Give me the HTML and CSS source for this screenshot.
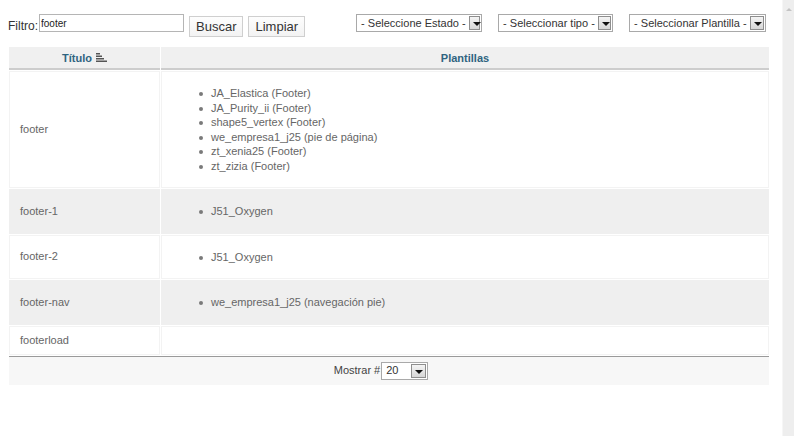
FILE: index.html
```html
<!DOCTYPE html>
<html lang="es">
<head>
    <meta charset="UTF-8">
    <title>Posiciones de módulos</title>
    <link rel="stylesheet" href="styles.css">
</head>
<body>
    <div class="page">
        <!-- Filter bar -->
        <form class="filter-bar">
            <label class="filter-label" for="filter_search">Filtro:</label>
            <input type="text" id="filter_search" class="filter-input" value="footer">
            <button type="button" class="btn">Buscar</button>
            <button type="button" class="btn">Limpiar</button>

            <div class="filters">
                <span class="fake-select sel-estado">
                    <span class="sel-text">- Seleccione Estado -</span>
                    <span class="sel-arrow"></span>
                </span>
                <span class="fake-select sel-tipo">
                    <span class="sel-text">- Seleccionar tipo -</span>
                    <span class="sel-arrow"></span>
                </span>
                <span class="fake-select sel-plantilla">
                    <span class="sel-text">- Seleccionar Plantilla -</span>
                    <span class="sel-arrow"></span>
                </span>
            </div>
        </form>

        <!-- Positions table -->
        <table class="adminlist">
            <thead>
                <tr>
                    <th class="col-title">
                        <a href="#">Título</a>
                        <svg class="sort-icon" width="11" height="10" viewBox="0 0 11 10">
                            <rect x="0" y="0" width="4" height="1.5" fill="#555"/>
                            <rect x="0" y="2.5" width="6" height="1.5" fill="#555"/>
                            <rect x="0" y="5" width="8" height="1.5" fill="#555"/>
                            <rect x="0" y="7.5" width="11" height="1.5" fill="#555"/>
                        </svg>
                    </th>
                    <th>Plantillas</th>
                </tr>
            </thead>
            <tbody>
                <tr class="row0">
                    <td>footer</td>
                    <td>
                        <ul>
                            <li>JA_Elastica (Footer)</li>
                            <li>JA_Purity_ii (Footer)</li>
                            <li>shape5_vertex (Footer)</li>
                            <li>we_empresa1_j25 (pie de página)</li>
                            <li>zt_xenia25 (Footer)</li>
                            <li>zt_zizia (Footer)</li>
                        </ul>
                    </td>
                </tr>
                <tr class="row1">
                    <td>footer-1</td>
                    <td><ul><li>J51_Oxygen</li></ul></td>
                </tr>
                <tr class="row0">
                    <td>footer-2</td>
                    <td><ul><li>J51_Oxygen</li></ul></td>
                </tr>
                <tr class="row1">
                    <td>footer-nav</td>
                    <td><ul><li>we_empresa1_j25 (navegación pie)</li></ul></td>
                </tr>
                <tr class="row0">
                    <td>footerload</td>
                    <td></td>
                </tr>
            </tbody>
            <tfoot>
                <tr>
                    <td colspan="2">
                        <div class="limit">
                            <span>Mostrar #</span>
                            <span class="fake-select sel-limit">
                                <span class="sel-text">20</span>
                                <span class="sel-arrow"></span>
                            </span>
                        </div>
                    </td>
                </tr>
            </tfoot>
        </table>
    </div>

    <!-- Frame scrollbar -->
    <div class="scrollbar">
        <span class="scroll-up"></span>
    </div>
</body>
</html>
```

FILE: styles.css
```css
/* Reset and global styling */
* {
    box-sizing: border-box;
}
html, body {
    height: 100%;
}
body {
    margin: 0;
    font-family: "Liberation Sans", Arial, sans-serif;
    font-size: 11px;
    color: #666;
    background-color: #fff;
    display: flex;
}
.page {
    flex: 1;
    padding: 14px 12px 0 8px;
}

/* Filter bar */
.filter-bar {
    display: flex;
    align-items: center;
    height: 24px;
    margin: 0;
}
.filter-label {
    font-size: 12px;
    color: #333;
}
.filter-input {
    width: 145px;
    height: 18px;
    margin: 0 0 0 1px;
    padding: 0 1px;
    border: 1px solid #b5b5b5;
    font-family: "Liberation Sans", Arial, sans-serif;
    font-size: 10px;
    color: #222;
    align-self: flex-start;
}
.btn {
    height: 21px;
    margin: 1px 0 0 5px;
    padding: 0 6px;
    border: 1px solid #cfcfcf;
    background: linear-gradient(#fdfdfd, #f3f3f3);
    font-family: "Liberation Sans", Arial, sans-serif;
    font-size: 13px;
    color: #333;
    line-height: 19px;
}
.filters {
    display: flex;
    gap: 16px;
    margin-left: 51px;
    align-self: flex-start;
}

/* Old style select boxes */
.fake-select {
    display: inline-flex;
    align-items: center;
    height: 18px;
    padding: 0 1px 0 4px;
    border: 1px solid #a9a9a9;
    background-color: #fff;
    font-size: 11px;
    color: #333;
    white-space: nowrap;
}
.sel-text {
    flex: 1;
}
.sel-arrow {
    position: relative;
    width: 15px;
    height: 14px;
    margin-left: 3px;
    border: 1px solid #8e8e8e;
    background: linear-gradient(#f4f4f4, #d6d6d6);
}
.sel-arrow::after {
    content: "";
    position: absolute;
    left: 3px;
    top: 5px;
    border-left: 4px solid transparent;
    border-right: 4px solid transparent;
    border-top: 4px solid #111;
}
.sel-estado { width: 126px; }
.sel-tipo { width: 115px; }
.sel-plantilla { width: 137px; }
.sel-limit {
    width: 47px;
    margin-left: 1px;
}

/* Positions table */
.adminlist {
    width: 762px;
    margin: 8px 0 0 0;
    border-collapse: separate;
    border-spacing: 1px;
    background-color: #fff;
}
.adminlist th {
    height: 23px;
    padding: 0 10px;
    background-color: #f0f0f0;
    border-bottom: 2px solid #cdcdcd;
    color: #2f6480;
    font-weight: bold;
    font-size: 11px;
}
.adminlist th a {
    color: #2f6480;
    text-decoration: none;
}
.adminlist .col-title {
    width: 151px;
}
.sort-icon {
    vertical-align: -1px;
    margin-left: 1px;
}
.adminlist td {
    padding: 4px 10px;
    line-height: 19px;
    border: 1px solid #f3f3f3;
    vertical-align: middle;
}
.adminlist tr.row1 td {
    background-color: #efefef;
    border-color: #efefef;
}
.adminlist ul {
    margin: 10px 0;
    padding-left: 39px;
    list-style: none;
    line-height: 14.5px;
}
.adminlist li {
    position: relative;
}
.adminlist li::before {
    content: "";
    position: absolute;
    left: -12px;
    top: 6px;
    width: 4px;
    height: 4px;
    border-radius: 50%;
    background-color: #7a7a7a;
}

/* Table footer */
.adminlist tfoot td {
    height: 29px;
    padding: 0;
    background-color: #f7f7f7;
    border: none;
    border-top: 1px solid #9a9a9a;
}
.limit {
    display: flex;
    justify-content: center;
    align-items: center;
    padding-right: 16px;
    color: #444;
}

/* Frame scrollbar */
.scrollbar {
    width: 12px;
    background-color: #eeeeee;
    border-left: 1px solid #f6f6f6;
    position: relative;
}
.scroll-up {
    position: absolute;
    left: 3px;
    top: 8px;
    border-left: 3px solid transparent;
    border-right: 3px solid transparent;
    border-bottom: 3px solid #c4c4c4;
}
```
